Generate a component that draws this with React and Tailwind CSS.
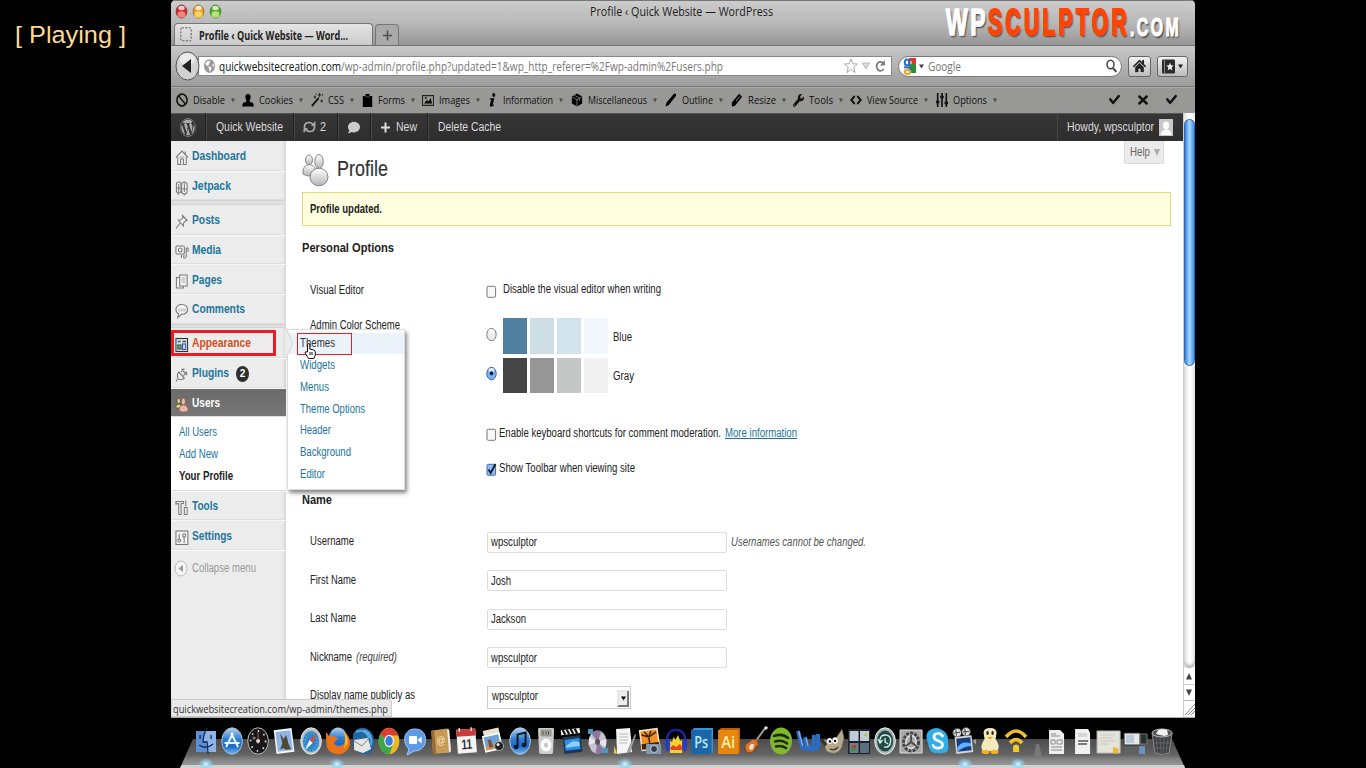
import React, { useLayoutEffect, useRef, useState } from "react";
import { FaBan, FaWrench, FaHome, FaWordpress, FaCheck, FaTimes, FaComment, FaGlobeAmericas } from "react-icons/fa";

/* One line of text, condensed or widened to a given width. */
function T({ w, className = "", children }) {
  const ref = useRef(null);
  const [k, setK] = useState(1);
  useLayoutEffect(() => {
    const n = ref.current.getBoundingClientRect().width / k;
    if (n) setK(w / n);
  }, [w, children]);
  return (
    <span className={"inline-flex shrink-0 leading-none whitespace-nowrap " + className} style={{ width: w }}>
      <span ref={ref} className="origin-left shrink-0 leading-[normal]" style={{ transform: `scaleX(${k})` }}>{children}</span>
    </span>
  );
}

const lucida = "font-['Open_Sans','Noto_Sans',sans-serif]";

function Light({ a, b, c }) {
  return (
    <svg width="13" height="15" viewBox="0 0 13 15" className="shrink-0">
      <ellipse cx="6.5" cy="7.5" rx="5.4" ry="6.5" fill={b} stroke={c} strokeWidth=".8" />
      <ellipse cx="6.5" cy="10.5" rx="4" ry="3.2" fill={a} opacity=".8" />
      <ellipse cx="6.5" cy="4" rx="3.2" ry="2.2" fill="#fff" opacity=".75" />
    </svg>
  );
}

const Down = ({ className = "text-[#4c4c4a]" }) => (
  <svg width="5" height="5" viewBox="0 0 5 5" className={"shrink-0 " + className}><path d="M0 .5h5L2.5 4.5z" fill="currentColor" /></svg>
);

const G = ({ children, w = 14, h = 14 }) => (
  <svg width={w} height={h} viewBox="0 0 14 14" className="shrink-0" preserveAspectRatio="none">{children}</svg>
);

const tools = [
  ["Disable", 66, 32, <FaBan preserveAspectRatio="none" className="h-[14px] w-[12px]" />],
  ["Cookies", 69, 34, <G><path d="M7 1c2 0 2.800 1.500 2.600 3.300C9.500 6 8.600 7 8.500 8.500l3.500 1.500L13 13.500H1l1-3.500 3.500-1.500C5.400 7 4.500 6 4.400 4.300 4.200 2.500 5 1 7 1z" /></G>],
  ["CSS", 50, 16, <G w={12}><path d="M1 13L9 5" stroke="#151515" strokeWidth="2.200" /><path d="M10 0v4M8 2h4M4.500 2.500v3M3 4h3M12.500 6.500v3M11 8h3M13.300 1v1.500M6 .5v1.200" stroke="#222" strokeWidth="1.100" /></G>],
  ["Forms", 61, 27, <G w={11}><path d="M1 3h3.500V1h5v2H13v11H1z" /><path d="M4 3.800h6" stroke="#777" strokeWidth=".7" /></G>],
  ["Images", 64, 31, <G w={12}><path d="M.6 2.600h12.800v9.800H.6z" fill="none" stroke="#222" strokeWidth="1.200" /><path d="M2.500 10.500l3-3.500 2 1.500L10 5l1.800 5.500z" /><circle cx="4.500" cy="5" r="1" /></G>],
  ["Information", 85, 50, <G w={11}><circle cx="8.600" cy="2" r="1.900" /><path d="M3.500 5.500l5.800-.6-2 7 1.600-.6-.4 1.300C6.500 14 3.500 14.500 3.800 11.800L5.300 6.800 3.500 6.500z" /></G>],
  ["Miscellaneous", 94, 59, <G w={12}><path d="M7 .5l6 3v7l-6 3-6-3v-7z" /><path d="M1.500 4L7 6.700 12.500 4M7 6.700V13M4 2.200l6 3v2.500" stroke="#999" strokeWidth=".8" fill="none" /></G>],
  ["Outline", 66, 31, <G w={12}><path d="M.5 13.500l1.300-4L10.500.8q1-.8 2 .2t.2 2L4.500 12z" /></G>],
  ["Resize", 61, 28, <G w={12}><path d="M1 9.500L9.500.8l3.500 3L4.500 13 1 13.500z" /><path d="M6 8l4-4.500" stroke="#999" strokeWidth="1" /></G>],
  ["Tools", 58, 24, <FaWrench preserveAspectRatio="none" className="h-[13px] w-[11px]" />],
  ["View Source", 86, 51, <G w={12}><path d="M5.500 3L1.500 7l4 4M8.500 3l4 4-4 4" fill="none" stroke="#111" strokeWidth="2.200" /></G>],
  ["Options", 66, 34, <G w={12}><path d="M2 0v14M7 0v14M12 0v14" stroke="#111" strokeWidth="1.900" /><path d="M0 9h4M5 4h4M10 10h4" stroke="#111" strokeWidth="2.400" /></G>],
];

const S = ({ children, className = "" }) => (
  <svg width="14" height="17" viewBox="0 0 15 17" preserveAspectRatio="none" className={"mt-[3px] shrink-0 " + className} fill="#f3f3f3" stroke="#777" strokeWidth="1.100">{children}</svg>
);

const ic = {
  dash: <S><path d="M3 8v7.500h9V8M1 8.500l6.500-6.500 6.500 6.500" /><path d="M11 2.500v3M6 15.500V10h3v5.500" /><path d="M5 8h5" stroke="#999" /></S>,
  jet: <S><rect x="1.500" y="3" width="5" height="11" rx="2.500" /><rect x="7" y="3" width="6" height="12" rx="3" /><path d="M4 5v8M10 4v9M3.500 14v2M10 15v1.500M1.500 9H6M7 10h6" /></S>,
  pin: <S><path d="M8 2.500l5 5-2 .5-2 2.500v2.500L3.500 7l2.700-.2 2.200-2z" /><path d="M5.500 10L1 15.500" /></S>,
  media: <S><rect x="1" y="3" width="9" height="8" rx="1" /><circle cx="5.500" cy="7" r="2" /><path d="M12 5v9.500M12 5h2v4M9.500 12v3h2M7 12v3" /></S>,
  pages: <S><path d="M1.500 4.500H9v10.500H1.500z" /><path d="M5 2h8v11H5z" /><path d="M7 5h4M7 7h4M7 9h4" stroke="#aaa" /></S>,
  com: <S><path d="M7.500 2.500C3.500 2.500 1 4.500 1 7.500c0 2.200 1 3.500 3 4.300L3 15.500l4-3.200c4 0 6.500-1.800 6.500-4.800S11 2.500 7.500 2.500z" /><path d="M3 8h9" stroke="#d2d2d2" strokeWidth="3" /></S>,
  app: <S><rect x="1" y="2.500" width="12.500" height="13" fill="#cfe0ee" stroke="#333" /><path d="M3 5.500h3M8 5.500h4" stroke="#456" strokeWidth="1.500" /><rect x="3" y="9" width="3.500" height="4" fill="#7aab56" stroke="#356" /><rect x="8" y="8" width="3.500" height="5.500" fill="#c3d5ff" stroke="#459" /></S>,
  plug: <S><path d="M4 6l6 6c-3 2.500-6 2-7 0S2.500 8 4 6zM6.500 6l3.500-3.500M9 9.500l4-3.500M2.500 13L1 15.500M7 3l6 6" /></S>,
  users: <S><ellipse cx="4" cy="5" rx="1.800" ry="2.700" fill="#f1df85" stroke="#6d6546" /><path d="M.8 12c0-5 6.500-5 6.500 0z" fill="#f1df85" stroke="#6d6546" /><ellipse cx="9" cy="5.500" rx="2.300" ry="3.500" fill="#edb6ac" stroke="#7d5a55" strokeWidth=".8" /><path d="M4.500 15c-1-8 10.500-8 9.500 0q-5 2.500-9.500 0z" fill="#edb6ac" stroke="#7d5a55" strokeWidth=".8" /></S>,
  tools: <S><path d="M1 5V2.500h8v2H6.500V15.500H4V4.500z" /><path d="M11.500 1.500v6M10 8.500h3v7h-3z" /></S>,
  set: <S><rect x="1" y="2" width="12.800" height="13.500" /><path d="M4.500 5v7M9.800 8v6" /><circle cx="4.500" cy="11.500" r="1.500" /><circle cx="9.800" cy="6.500" r="1.600" /></S>,
};

function Item({ icon, w, label, color = "text-[#21759b]", line = true, bg = "", children }) {
  return (
    <div className={"flex h-[29.700px] shrink-0 items-center border-t border-[#f7f7f7] pl-[4px] shadow-[inset_0_-1px_0_#dedede] " + (line ? "" : "border-t-0 ") + bg}>
      {ic[icon]}
      <T w={w} className={"ml-[3px] text-[12.500px] font-bold " + color}>{label}</T>
      {children}
    </div>
  );
}
const Sep = () => <div className="h-[4.500px] shrink-0 border-y border-[#d3d3d3] bg-[#e0e0e0]" />;

function Check({ on }) {
  return (
    <svg width="11" height="13" viewBox="0 0 11 13" className="shrink-0">
      <rect x="1" y="1.300" width="8.600" height="11" rx="1.200" fill={on ? "#8dbdf2" : "#f8f8f8"} stroke={on ? "#446fa8" : "#777"} strokeWidth="1" />
      {on && <path d="M2.500 6.500l2.200 3.500L9.500 1" fill="none" stroke="#10152c" strokeWidth="1.800" />}
    </svg>
  );
}
function Radio({ on }) {
  return (
    <svg width="11" height="15" viewBox="0 0 11 15" className="shrink-0">
      <ellipse cx="5.500" cy="7.500" rx="4.700" ry="6.200" fill={on ? "#79b4f2" : "#ececec"} stroke={on ? "#3d64a0" : "#7c7c7c"} />
      <ellipse cx="5.500" cy="4" rx="3" ry="2" fill="#fff" opacity=".7" />
      {on && <ellipse cx="5.500" cy="7.300" rx="1.700" ry="2.100" fill="#101c38" />}
    </svg>
  );
}

function Field({ label, lw, note, nw, value, vw, after }) {
  return (
    <div className="flex h-[38.500px] shrink-0 items-center pl-[7.500px] text-[12px] text-[#222]">
      <div className="-mt-[2px] flex w-[177px] gap-[4px]"><T w={lw}>{label}</T>{note && <T w={nw} className="italic text-[#444]">{note}</T>}</div>
      <div className="flex h-[21px] w-[240.500px] items-center rounded-[2px] border border-[#dcdcdc] pl-[3px]"><T w={vw}>{value}</T></div>
      {after}
    </div>
  );
}

const D = ({ children }) => <svg width="26.13" height="30" viewBox="0 0 26 30" className="shrink-0">{children}</svg>;
const circ = (f, s = "#ddd") => <ellipse cx="13" cy="15" rx="10.300" ry="13.200" fill={f} stroke={s} strokeWidth="1" />;
const adobe = (f, d, t, c) => (
  <D><path d="M3 4l2-2h19v24l-2 2z" fill={d} /><path d="M2 4h20.500v24H2z" fill={f} /><text x="12.200" y="21.500" textAnchor="middle" fontSize="16" textLength="14" lengthAdjust="spacingAndGlyphs" fontFamily="Open Sans" fontWeight="600" fill={c}>{t}</text></D>
);

const dock = [
  <D><path d="M3 5h20v21H3z" fill="#8eb4ea" /><path d="M3 5h10q-3 7-2 11h2l1 10H3z" fill="#5c8fd8" /><path d="M14 2q-4 7-4 14h4l1 12M7 9v4M18 9v4M6 19q7 5 14-1" stroke="#122a58" fill="none" strokeWidth="1.300" /></D>,
  <D>{circ("url(#blue)", "#a9bcd0")}<path d="M7 21l7-14M19 21L12 7M5.500 17h15" stroke="#e9f5ff" strokeWidth="2" /></D>,
  <D>{circ("#16181a", "#bbb")}<ellipse cx="13" cy="15" rx="7.500" ry="10" fill="none" stroke="#eee" strokeWidth="1.600" strokeDasharray="1.500 5.300" /><path d="M13 6v12" stroke="#c44" strokeWidth="1" /><circle cx="13" cy="15" r="2" fill="#d9d9d9" /><circle cx="9" cy="12" r="1.600" fill="#777" /></D>,
  <D><g transform="rotate(-7 13 15)"><path d="M4 3h18v24H4z" fill="#f6f6f6" /><path d="M5.500 5h15v20h-15z" fill="#8fb5e8" /><path d="M10 7l3 6 3-4 1 9 2 6h-5l-3-2-3 1 3-6z" fill="#4f4a30" /></g></D>,
  <D>{circ("#b9c3ca", "#e8e8e8")}<ellipse cx="13" cy="15.500" rx="8" ry="10.500" fill="#2c87c8" /><ellipse cx="13" cy="15.500" rx="6" ry="8.500" fill="none" stroke="#a8daf5" strokeDasharray="1 2" /><path d="M19 7l-4.500 10-3-3z" fill="#e44b3a" /><path d="M7 24l4.500-10 3 3z" fill="#fff" /></D>,
  <D><ellipse cx="14" cy="13.500" rx="9.500" ry="12" fill="url(#blue)" /><path d="M2 6l3 4 5 0 4 3-4 3q1 5 6 4t6-7V7q7 9 2 16t-13 5Q2 26 2 15z" fill="#e8731c" /><path d="M19 5q6 5 4.500 13l-4 5q3-9 0-18z" fill="#f8b32c" /></D>,
  <D><path d="M3 8q5-9 14-5 8 4 7 15t-9 10Q4 28 3 17z" fill="#23659f" /><path d="M6 6q9-4 13 6M14 4q9 4 7 15" stroke="#5aa8dc" strokeWidth="2" fill="none" /><path d="M4 14l14-2 3 11-8 4-9-3z" fill="#e6e6e4" /><path d="M4 15l8 5 7-8" stroke="#888" fill="none" /></D>,
  <D>{circ("#ebb925", "none")}<path d="M13 15L4 8.500C9-.5 18 0 22.500 9.500H13z" fill="#db3d30" /><path d="M13 15L4 8.500Q0 18 5.500 24.500 8 28 13.500 28L17 19z" fill="#3fa648" /><ellipse cx="13" cy="15" rx="4.800" ry="6.200" fill="#f3f3f3" /><ellipse cx="13" cy="15" rx="3.700" ry="4.900" fill="#3b7dda" /></D>,
  <D><path d="M13 3c7 0 10.500 5 10.500 10.500S20 25 12 25l-7 4 2-6C0 17 1 3 13 3z" fill="#5d9ae8" stroke="#a9cbf5" /><rect x="7" y="10" width="8" height="8" rx="1" fill="#fff" /><path d="M15.500 14l4-3.500v7z" fill="#fff" /></D>,
  <D><g transform="rotate(-5 13 15)"><path d="M4 4l16-1 2 1v22l-2 1.500L4 27z" fill="#c79a55" /><path d="M20 4l2 1v21l-2 1z" fill="#eee" /><path d="M4 4h3v23H4z" fill="#976b32" /><text x="8.500" y="18" fontSize="11" textLength="9" lengthAdjust="spacingAndGlyphs" fontFamily="Liberation Sans" fill="#f8e7c1">@</text></g></D>,
  <D><g transform="rotate(-4 13 15)"><path d="M3 3h19v24H3z" fill="#f4f4f4" /><path d="M3 3h19v7H3z" fill="#cc3b38" /><path d="M6 1.500v4M18 1.500v4" stroke="#ddd" strokeWidth="1.500" /><text x="12.500" y="23" textAnchor="middle" fontSize="14" fontWeight="700" textLength="11" lengthAdjust="spacingAndGlyphs" fontFamily="Liberation Sans" fill="#333">11</text></g></D>,
  <D><g transform="rotate(-12 13 15)"><path d="M5 3h16v17H5z" fill="#e8e3cf" /><path d="M3 8h18v17H3z" fill="#fff" /><path d="M4.500 9.500h15V23h-15z" fill="#6ba2d5" /><path d="M4.500 19h15v4h-15z" fill="#c69b66" /><path d="M8 13h3l1 8H8z" fill="#8a4b2d" /></g><circle cx="19" cy="20" r="4.500" fill="#222" stroke="#aaa" /><circle cx="18" cy="18.500" r="1.500" fill="#eee" /></D>,
  <D>{circ("url(#blue)", "#b9cbe0")}<path d="M10.500 20V8.500l8-2V18" stroke="#10182c" strokeWidth="2" fill="none" /><ellipse cx="9" cy="21" rx="2.500" ry="2.300" fill="#10182c" /><ellipse cx="17" cy="19" rx="2.500" ry="2.300" fill="#10182c" /></D>,
  <D><path d="M6 2h14q1 0 1 2l-1 22q0 2-2 2H8q-2 0-2-2L5 4q0-2 1-2z" fill="#cdcdcd" /><rect x="8" y="4" width="10" height="6" fill="#a7a99b" stroke="#777" strokeWidth=".6" /><path d="M10 5.500v3M13 5.500v3M15.500 5.500v3" stroke="#444" /><ellipse cx="13" cy="19" rx="5.500" ry="6.500" fill="#fafafa" /><ellipse cx="13" cy="19" rx="2" ry="2.500" fill="#c5c5c5" /></D>,
  <D><g transform="rotate(-7 13 15)"><path d="M4 10h18v17H4z" fill="#1b3653" /><path d="M5.500 13h15v11h-15z" fill="#2e8fe2" /><path d="M6 20q7-7 14-3v4H6z" fill="#8cd0ff" /><path d="M3 3h19v5H3z" fill="#f2f2f2" /><path d="M5 3l2 5M9 3l2 5M13 3l2 5M17 3l2 5" stroke="#111" strokeWidth="2.200" /></g></D>,
  <D><ellipse cx="12.500" cy="16" rx="9" ry="11.500" fill="#c6c2cf" /><path d="M12.500 16L6 7q6-4 10-1zM12.500 16l7 8q-4 5-9 3z" fill="#8e759f" /><path d="M12.500 16l-9 3 1-8zM12.500 16l9-3-1 8z" fill="#e8e4ea" /><ellipse cx="12.500" cy="16" rx="2.500" ry="3" fill="#555" /><path d="M3 3h5v5H3zM17 22h6v5h-6z" fill="#4a97bd" /></D>,
  <D><path d="M5 3l14-1 2 24-15 2z" fill="#f4f4f4" /><path d="M8 8h9M8 11h9M8 14h9M8 17h8" stroke="#bbb" /><path d="M24 8L17 24l-1 4 3-2 6-17z" fill="#a7a9ad" stroke="#666" strokeWidth=".5" /><path d="M3 20l3 7-3 1z" fill="#e6cf3a" /></D>,
  <D><g transform="rotate(-8 12 13)"><path d="M3 3h19v21H3z" fill="#f1e7d2" /><path d="M4.500 4.500h16v17h-16z" fill="#ef8f1f" /><path d="M12 12V22M4.500 18h16v4h-16z" stroke="#3a1d08" strokeWidth="1.500" fill="#4b2509" /><path d="M5 8l7 3 8-4M8 5l4 6 3-6" stroke="#3a1d08" strokeWidth="1.400" fill="none" /></g><path d="M9 18h15v10H9z" fill="#8298ad" /><circle cx="17" cy="23" r="3.500" fill="#2e3c4c" stroke="#ccc" /></D>,
  <D><path d="M4 17Q3 4 13 4t9 13" stroke="#17249d" strokeWidth="2.500" fill="none" /><path d="M7 27V15l2 1 1.500-5 2 3L15 9l2 6 2-1v13z" fill="#f6d32e" /><path d="M7 22l3-3 3 2 4-3 2 3v3H8z" fill="#e0472b" /><ellipse cx="4.300" cy="19" rx="2.500" ry="6.500" fill="#2b3cc4" /><ellipse cx="21.700" cy="19" rx="2.500" ry="6.500" fill="#2b3cc4" /></D>,
  adobe("#1a66a8", "#3e92d3", "Ps", "#bfe6ff"),
  adobe("#e8860f", "#b5600a", "Ai", "#fff1a8"),
  <D><path d="M24 1l-11 15" stroke="#9b9b9b" strokeWidth="2" /><path d="M23 1l2 2" stroke="#ddd" strokeWidth="3" /><path d="M13 13q-4 0-6 3-5 2-4 7 1 5 6 4 4-1 5-6 3-2 2-5z" fill="#d9772c" stroke="#7a3610" /><path d="M9 18q-3 3-1 6l3-1 1-5z" fill="#f5e6cf" /></D>,
  <D><ellipse cx="13" cy="15" rx="11" ry="13.500" fill="#7fb82c" /><path d="M6 10q8-3 14 2M7 15.500q7-2 12 2M8 20.500q5-1.500 10 1.500" stroke="#1d2b0b" strokeWidth="2.500" fill="none" strokeLinecap="round" /></D>,
  <D><path d="M4 5l4 16q4 4 5-1l-2-9M13 19q3 6 6 4l1-14M19 23q4 1 5-3V8" stroke="#2b6cc6" strokeWidth="4" fill="none" /><path d="M4.500 5l4 15M12 12l2 8" stroke="#7db3ee" strokeWidth="1.200" fill="none" /></D>,
  <D><path d="M3 13l6 2 7-3 6-9 2 9-2 9q-4 8-11 6-7-1-6-8z" fill="#b5a88b" stroke="#5d5544" strokeWidth=".6" /><ellipse cx="9.500" cy="15" rx="2.500" ry="3" fill="#fff" /><ellipse cx="15" cy="14.500" rx="2.700" ry="3.200" fill="#fff" /><circle cx="9.800" cy="15.500" r="1.200" /><circle cx="15" cy="15" r="1.200" /><path d="M2 14l3 4" stroke="#333" strokeWidth="3.500" strokeLinecap="round" /><path d="M10 23q5 2 8-2" stroke="#4d4435" fill="none" strokeWidth="1.500" /></D>,
  <D><path d="M2 3h22v25H2z" fill="#1c2027" /><path d="M3.500 5h9v10h-9zM14 5h9v10h-9z" fill="#c3cbd6" /><path d="M3.500 17h9v10h-9z" fill="#6e7e91" /><path d="M14 17h9v10h-9z" fill="#5d6d82" /><path d="M6 19h4v3H6z" fill="#c73a2b" /><path d="M5 22h5v3H5z" fill="#349246" /><path d="M17 9l4-2v4z" fill="#a6c34f" /></D>,
  <D>{circ("#a9b8b5", "#eee")}<ellipse cx="13" cy="15" rx="8" ry="10.500" fill="#244b4a" /><path d="M8 17Q7 9 13 9t5.500 6.500Q18 22 12 21M13 12v4l3 2M6 13l2 4 2.500-3" stroke="#d8efe9" strokeWidth="1.400" fill="none" /></D>,
  <D><path d="M2 4h22v23H2z" fill="#a9a9a9" stroke="#ddd" /><ellipse cx="13" cy="16" rx="7.500" ry="9" fill="none" stroke="#454545" strokeWidth="3" strokeDasharray="3 1.200" /><ellipse cx="13" cy="16" rx="5" ry="6.500" fill="none" stroke="#dedede" strokeWidth="1.500" /><path d="M13 16V9M13 16l5 4M13 16l-5 4" stroke="#4b4b4b" strokeWidth="1.800" /></D>,
  <D><path d="M5 4q6-4 12 0 7 3 6 14 2 9-6 9Q3 29 3 17-1 8 5 4z" fill="#33aee9" /><path d="M17.500 10q-2-3-5-2.500-4 .5-3.500 4c.5 4 8.500 2.500 8.500 7 0 4.500-7.500 5-9.500 1" stroke="#fff" strokeWidth="2.700" fill="none" strokeLinecap="round" /></D>,
  <D><g transform="rotate(-6 13 15)"><circle cx="7" cy="6" r="4.300" fill="#ddd" stroke="#444" /><circle cx="16" cy="6" r="4.300" fill="#ddd" stroke="#444" /><path d="M6 3v6M4 6h6M15 3v6M13 6h6" stroke="#444" /><path d="M4 10h17v17H4z" fill="#d6d6d6" /><path d="M5.500 12h14v13h-14z" fill="#153e81" /><path d="M5.500 21q5-7 14-3v3q-7-1-14 4z" fill="#5fb3ff" /></g><path d="M22 15l3-2v6z" fill="#aaa" /></D>,
  <D><path d="M6.500 7q0-5 6.500-5t6.500 5l-1 6q5 7 2 12h-15q-3-5 2-12z" fill="#f2e9bd" /><ellipse cx="10.500" cy="7" rx="1.200" ry="2" fill="#222" /><ellipse cx="15.500" cy="7" rx="1.200" ry="2" fill="#222" /><path d="M10 11h6l-3 2.500z" fill="#eda21a" /><ellipse cx="8.500" cy="26" rx="4" ry="2" fill="#efb21c" /><ellipse cx="17.500" cy="26" rx="4" ry="2" fill="#efb21c" /></D>,
  <D><g fill="none" stroke="#edbf2e" strokeWidth="3.700"><path d="M3 11q10-12 20 0M7 17q6-7 12 0" /></g><path d="M10 20q3-3 6 0v6h-6z" fill="#f6c929" /></D>,
];

const files = [
  <D><path d="M5 4h11l4 4v20H5z" fill="#eee" /><path d="M7 8h5M7 10h9M7 14h4v4H7zM13 14h5v4h-5zM7 21h11M7 24h11" stroke="#888" fill="none" /></D>,
  <D><path d="M5 3h13l2 4v21H5z" fill="#f1f1f1" /><path d="M8 8h9M8 10h9" stroke="#b9b9b9" /><path d="M8 15h10M8 18h9" stroke="#555" strokeWidth="1.300" /></D>,
  <D><path d="M1 5h23v22H1z" fill="#e3e3dc" stroke="#bbb" /><path d="M4 9h15M4 12h13M4 15h15M4 18h9" stroke="#c9c9bf" /><path d="M17 21l6 2-2 5-4-1z" fill="#edb62e" /></D>,
  <D><path d="M2 7h16v12H2z" fill="#e8e8e8" stroke="#333" /><path d="M4 9h8v8H4z" fill="#b9cbd8" /><path d="M18 8h7v10h-7z" fill="#26332f" stroke="#777" /><path d="M2 22h14M4 25h10" stroke="#666" strokeWidth="1.500" /><path d="M17 20h6v8h-6z" fill="#6a8fc1" /></D>,
  <D><path d="M3 7l3 20q7 3 14 0l3-20z" fill="#3f4143" stroke="#8b8b8b" /><ellipse cx="13" cy="7" rx="10" ry="4" fill="#555" stroke="#bbb" /><path d="M7 8l2-4 4-1 5 1 1 5-4 1z" fill="#f1f1f1" /><path d="M7 12l2 15M11 12l1 15M15 12l-1 15M19 12l-2 15M5 17h16M5 22h15" stroke="#777" strokeWidth=".6" /></D>,
];

function Dock() {
  return (
    <div className="relative h-[50px] w-[1366px] shrink-0 bg-black">
      <svg width="1366" height="50" className="absolute left-0 top-0">
        <defs>
          <linearGradient id="shelf" x1="0" y1="0" x2="0" y2="1"><stop offset="0" stopColor="#4c4c4c" /><stop offset=".55" stopColor="#646464" /><stop offset=".68" stopColor="#808080" /><stop offset="1" stopColor="#a2a2a2" /></linearGradient>
          <linearGradient id="blue" x1="0" y1="0" x2="0" y2="1"><stop offset="0" stopColor="#b5d3ef" /><stop offset=".45" stopColor="#2c7cd0" /><stop offset=".7" stopColor="#1c69c4" /><stop offset="1" stopColor="#6dbdf5" /></linearGradient>
          <radialGradient id="glow"><stop offset="0" stopColor="#e7fbff" /><stop offset=".5" stopColor="#8ed4f8" stopOpacity=".7" /><stop offset="1" stopColor="#8ed4f8" stopOpacity="0" /></radialGradient>
        </defs>
        <path d="M193 21h979l13 29H180z" fill="url(#shelf)" />
        <path d="M182 47h1002l1 3H180z" fill="#d2d2d2" />
        <path d="M1034 39l2-13h3l3 13z" fill="#777" />
        {[206, 337, 625, 965, 1018].map((x) => <ellipse key={x} cx={x} cy="46" rx="8" ry="6" fill="url(#glow)" />)}
      </svg>
      <div className="relative flex pl-[193px] pt-[8px]">
        {dock.map((d, i) => <React.Fragment key={i}>{d}</React.Fragment>)}
        <div className="w-[15px] shrink-0" />
        {files.map((d, i) => <React.Fragment key={i}>{d}</React.Fragment>)}
      </div>
    </div>
  );
}

const BarCell = ({ className, children }) => <div className={"flex h-full shrink-0 items-center border-r border-[#222] shadow-[1px_0_0_#484848] " + className}>{children}</div>;

export default function App() {
  return (
    <div className="h-[768px] w-[1366px] overflow-hidden bg-black font-['Liberation_Sans',Arial,sans-serif]">
      <div className="flex h-[718px]">
        <div className="w-[171px] shrink-0 pl-[15px] pt-[21px]"><T w={111} className="text-[24.500px] text-[#ffd993]">[ Playing ]</T></div>
        <div className="relative flex h-[718px] w-[1024px] flex-col overflow-hidden rounded-t-[5px] bg-white">
          {/* title bar and tabs */}
          <div className="flex h-[46px] shrink-0 flex-col border-b border-[#707070] bg-linear-to-b from-[#cdcdcd] via-[#b9b9b9] to-[#969696] shadow-[inset_0_1px_0_#777]">
            <div className="flex h-[24px] items-center pl-[4px]">
              <div className="-mt-[1px] flex gap-[4px]">
                <Light a="#ff9a96" b="#cf2b2f" c="#872326" />
                <Light a="#ffe36b" b="#ec9c2d" c="#9a6420" />
                <Light a="#c5f58a" b="#55a92d" c="#3b7a21" />
              </div>
              <T w={183} className={"ml-[368px] text-[12px] font-medium text-[#1c1c1c] " + lucida}>Profile ‹ Quick Website — WordPress</T>
            </div>
            <div className="flex h-[22px] items-end pl-[3px]">
              <div className="flex h-[22px] w-[199px] items-center rounded-t-[4px] border border-b-0 border-[#777] bg-linear-to-b from-[#e4e4e4] to-[#cbcbcb] pl-[5px]">
                <svg width="12" height="15"><rect x=".8" y=".8" width="10.400" height="13" rx="1" fill="none" stroke="#555" strokeDasharray="2 1.500" /></svg>
                <T w={149} className={"mt-px ml-[7px] text-[11.500px] font-bold text-[#222] " + lucida}>Profile ‹ Quick Website — Word...</T>
              </div>
              <div className="ml-[2px] flex h-[21px] w-[24px] items-center justify-center rounded-t-[4px] border border-b-0 border-[#777] bg-[#a9a9a9]">
                <svg width="9" height="11"><path d="M4.500 .5v10M0 5.500h9" stroke="#4d4d4d" strokeWidth="1.600" /></svg>
              </div>
            </div>
          </div>
          {/* navigation bar */}
          <div className="flex h-[41px] shrink-0 items-center border-b border-[#777] bg-linear-to-b from-[#c9c9c9] to-[#9c9c9c] pl-[4px]">
            <svg width="26" height="30" viewBox="0 0 26 30" className="z-10 shrink-0"><ellipse cx="12.500" cy="15" rx="11.500" ry="14" fill="#d2d2d2" stroke="#555" /><ellipse cx="12.500" cy="8" rx="8" ry="6" fill="#f3f3f3" opacity=".7" /><path d="M7 15l9-7v14z" fill="#222" /></svg>
            <div className="-ml-[3px] flex h-[20px] w-[694px] items-center border border-[#888] bg-white pl-[5px]">
              <FaGlobeAmericas preserveAspectRatio="none" className="h-[14px] w-[11px] shrink-0 text-[#999]" />
              <T w={122} className={"mt-px ml-[4px] text-[12px] font-medium text-[#111] " + lucida}>quickwebsitecreation.com</T>
              <T w={382} className={"mt-px text-[12px] font-medium text-[#777] " + lucida}>/wp-admin/profile.php?updated=1&wp_http_referer=%2Fwp-admin%2Fusers.php</T>
              <svg width="14" height="16" viewBox="0 0 14 16" className="ml-[121px]"><path d="M7 1l1.800 4.800 4.700.2-3.700 3.300L11 14.500 7 11.500 3 14.500l1.200-5.200L.5 6l4.700-.2z" fill="#fff" stroke="#aaa" /></svg>
              <svg width="8" height="8" className="ml-[4px]"><path d="M.5 1h7L4 7z" fill="#ddd" stroke="#aaa" strokeWidth=".8" /></svg>
              <svg width="11" height="14" viewBox="0 0 11 14" className="ml-[5px]"><path d="M8 4Q4.500 1.500 2.500 4.500T3 11q3 2 6-1" fill="none" stroke="#777" strokeWidth="1.700" /><path d="M9.800 1v5.500H5z" fill="#777" /></svg>
            </div>
            <div className="ml-[6px] flex h-[21px] w-[224px] items-center rounded-full border border-[#777] bg-white pl-[4px]">
              <svg width="14" height="17" viewBox="0 0 14 17"><path d="M6 0h7v6H6z" fill="#d63c35" /><path d="M6 6h7v9H6z" fill="#2e8c3a" /><ellipse cx="4" cy="4.500" rx="2.200" ry="3" fill="#fff" stroke="#2f6cc9" strokeWidth="2" /><path d="M1 9.500q6-1 7 2" fill="none" stroke="#2f6cc9" strokeWidth="2" /><ellipse cx="4.500" cy="14" rx="3" ry="2" fill="#fff" stroke="#e4a42b" strokeWidth="1.800" /><path d="M8 3v3" stroke="#fff" /></svg>
              <Down className="ml-[2px] text-[#444]" />
              <T w={33} className={"mt-px ml-[4px] text-[12px] font-medium text-[#777] " + lucida}>Google</T>
              <svg width="11" height="14" viewBox="0 0 11 14" className="ml-[145px]"><ellipse cx="4.500" cy="5.500" rx="3.500" ry="4.300" fill="none" stroke="#444" strokeWidth="1.500" /><path d="M6.800 8.800l3.500 4" stroke="#444" strokeWidth="2" /></svg>
            </div>
            <div className="ml-[6px] flex h-[21px] w-[23px] items-center justify-center rounded-[3px] border border-[#666] bg-linear-to-b from-[#f2f2f2] to-[#bdbdbd]"><FaHome preserveAspectRatio="none" className="h-[14px] w-[13px] text-[#222]" /></div>
            <div className="ml-[6px] flex h-[21px] w-[31px] items-center justify-center gap-[3px] rounded-[3px] border border-[#666] bg-linear-to-b from-[#f2f2f2] to-[#bdbdbd]">
              <svg width="13" height="15" viewBox="0 0 13 15"><rect width="13" height="14" y=".5" rx="1" fill="#2b2b2b" /><path d="M2.500 1v13" stroke="#888" /><path d="M8 3.500l1 2.700 2.700.2-2 1.900.6 3.200L8 9.800l-2.300 1.700.6-3.200-2-1.900L7 6.200z" fill="#f4f4f4" /></svg>
              <Down className="text-[#222]" />
            </div>
          </div>
          {/* developer toolbar */}
          <div className="flex h-[26px] shrink-0 items-center bg-[#989896] pl-[3px] shadow-[inset_0_1px_0_#aaa]">
            {tools.map(([t, iw, tw, icon]) => (
              <div key={t} className="flex shrink-0 items-center" style={{ width: iw }}>
                <div className="flex w-[16px] shrink-0 justify-center text-[#111]">{icon}</div>
                <T w={tw} className={"-mt-px ml-[3px] mr-[6px] text-[11px] font-medium text-[#111] " + lucida}>{t}</T>
                <svg width="4" height="5"><path d="M0 .5h4L2 4.500z" fill="#4c4c4a" /></svg>
              </div>
            ))}
            <div className="ml-[109px] flex gap-[18px] text-[#111]">
              <FaCheck preserveAspectRatio="none" className="h-[13px] w-[11px]" /><FaTimes preserveAspectRatio="none" className="h-[14px] w-[10px]" /><FaCheck preserveAspectRatio="none" className="h-[13px] w-[11px]" />
            </div>
          </div>
          <div className="flex h-[605px] shrink-0">
            <div className="flex w-[1012px] shrink-0 flex-col">
              {/* admin bar */}
              <div className="flex h-[28px] shrink-0 items-center bg-linear-to-b from-[#363636] to-[#2e2e2e] text-[12.500px] text-[#dcdcdc] shadow-[inset_0_1px_0_#555]">
                <BarCell className="w-[35px] justify-center"><FaWordpress preserveAspectRatio="none" className="h-[19px] w-[16px] text-[#aaa]" /></BarCell>
                <BarCell className="w-[88px] pl-[10px]"><T w={67}>Quick Website</T></BarCell>
                <BarCell className="w-[44px] gap-[4px] pl-[9px]">
                  <svg width="13" height="14" viewBox="0 0 13 14" fill="none" stroke="#a8a8a8" strokeWidth="1.700"><path d="M1.500 8.500V7Q1.500 2.500 6 2.500q3 0 4 2.500M11.500 5.500V7q0 4.500-4.500 4.500-3 0-4.500-2.500" /><path d="M12 1.500V5.500H8.500M1 12.500V8.500h3.500" strokeWidth="1" fill="#a8a8a8" /></svg>
                  <T w={6}>2</T></BarCell>
                <BarCell className="w-[33px] justify-center"><FaComment preserveAspectRatio="none" className="h-[13px] w-[12px] text-[#ccc]" /></BarCell>
                <BarCell className="w-[57px] gap-[6px] pl-[10px]"><svg width="9" height="11"><path d="M4.500 .5v10M0 5.500h9" stroke="#ddd" strokeWidth="2" /></svg><T w={21}>New</T></BarCell>
                <div className="flex w-[629px] items-center pl-[10px]"><T w={63}>Delete Cache</T></div>
                <div className="flex h-full flex-1 items-center border-l border-[#484848] pl-[9px]"><T w={87}>Howdy, wpsculptor</T>
                  <svg width="14" height="17" className="ml-[5px]"><rect width="14" height="17" fill="#c8c8c8" /><ellipse cx="7" cy="6.500" rx="3" ry="4" fill="#fff" /><path d="M1.500 16Q2 11 7 10.500t5.500 5.500z" fill="#fff" /></svg></div>
              </div>
              <div className="flex h-[577px] overflow-hidden">
                {/* side menu */}
                <div className="flex w-[115px] shrink-0 flex-col bg-[#ececec] shadow-[inset_-3px_0_3px_-1px_#d6d6d6]">
                  <Item icon="dash" w={54} label="Dashboard" line={false} />
                  <Item icon="jet" w={39} label="Jetpack" />
                  <Sep />
                  <Item icon="pin" w={28} label="Posts" line={false} />
                  <Item icon="media" w={29} label="Media" />
                  <Item icon="pages" w={30} label="Pages" />
                  <Item icon="com" w={53} label="Comments" />
                  <Sep />
                  <Item icon="app" w={59} label="Appearance" color="text-[#d54e21]" line={false} />
                  <Item icon="plug" w={37} label="Plugins"><span className="ml-[7px] mt-[1px] flex h-[16px] w-[13px] items-center justify-center rounded-[50%] bg-[#2e2e2e] text-[10px] font-bold text-white">2</span></Item>
                  <Item icon="users" w={28} label="Users" color="text-white" bg="border-[#5c5c5c] bg-linear-to-b from-[#6b6b6b] to-[#777777]" />
                  <div className="flex h-[73.500px] shrink-0 flex-col border-b border-[#dadada] bg-white pl-[8px] pt-[4px] text-[12px] text-[#21759b]">
                    <div className="flex h-[21.750px] items-center"><T w={38}>All Users</T></div>
                    <div className="flex h-[21.750px] items-center"><T w={39}>Add New</T></div>
                    <div className="flex h-[21.750px] items-center"><T w={54} className="font-bold text-[#222]">Your Profile</T></div>
                  </div>
                  <Item icon="tools" w={26} label="Tools" />
                  <Item icon="set" w={40} label="Settings" />
                  <div className="flex h-[35px] shrink-0 items-center border-t border-white pl-[3px]">
                    <svg width="14" height="17"><ellipse cx="7" cy="8.500" rx="6" ry="7.500" fill="#f4f4f4" stroke="#bbb" /><path d="M4.500 8.500l4.500-3.500v7z" fill="#999" /></svg>
                    <T w={64} className="ml-[4px] text-[12px] text-[#999]">Collapse menu</T>
                  </div>
                </div>
                {/* profile page */}
                <div className="flex w-[897px] shrink-0 flex-col bg-white pl-[16px] text-[12px] text-[#222]">
                  <div className="flex h-[51px] shrink-0">
                    <svg width="27" height="33" viewBox="0 0 27 33" className="mt-[13px]">
                      <defs><linearGradient id="gr" x1="0" y1="0" x2="0" y2="1"><stop offset="0" stopColor="#fff" /><stop offset="1" stopColor="#b5b5b5" /></linearGradient></defs>
                      <g fill="url(#gr)" stroke="#858585"><ellipse cx="7" cy="6" rx="3.500" ry="5" /><path d="M1 20q-1-9 7-9.500 6 1 6 9.500-6 4-13 0z" /><ellipse cx="17" cy="7.500" rx="4.200" ry="7" /><ellipse cx="17" cy="23" rx="9" ry="8.800" /></g>
                    </svg>
                    <T w={51} className="ml-[8px] mt-[15px] text-[22px] text-[#333] [-webkit-text-stroke:0.2px_#333]">Profile</T>
                    <div className="ml-[736px] flex h-[23px] w-[40px] items-center gap-[4px] rounded-b-[2px] border border-t-0 border-[#ddd] bg-[#ebebeb] pl-[5px]"><T w={20} className="text-[12px] text-[#666]">Help</T><svg width="6" height="7"><path d="M0 0h6L3 7z" fill="#aaa" /></svg></div>
                  </div>
                  <div className="flex h-[34px] w-[869px] shrink-0 items-center border border-[#e3db78] bg-[#ffffe0] pl-[7px]"><T w={72} className="font-bold">Profile updated.</T></div>
                  <div className="flex h-[44px] shrink-0 items-center"><T w={92} className="-mt-px text-[13px] font-bold">Personal Options</T></div>
                  <div className="flex h-[39px] shrink-0 items-center pl-[7.500px]">
                    <div className="w-[176.500px]"><T w={54}>Visual Editor</T></div>
                    <div className="mt-[3px] flex"><Check /></div><T w={158} className="-mt-px ml-[6px]">Disable the visual editor when writing</T>
                  </div>
                  <div className="flex h-[106px] shrink-0 pl-[7.500px]">
                    <div className="flex h-[31px] w-[176.500px] items-center"><T w={90}>Admin Color Scheme</T></div>
                    <div className="mt-[9px] flex flex-col gap-[4px]">
                      <div className="flex h-[35.500px] items-center"><div className="mb-[3px] flex"><Radio /></div>
                        <div className="ml-[5.500px] flex h-full gap-[3px]"><i className="w-[24px] bg-[#5080a0]" /><i className="w-[24px] bg-[#cddfe5]" /><i className="w-[24px] bg-[#d1e3ec]" /><i className="w-[24px] bg-[#f3f8ff]" /></div>
                        <T w={19} className="ml-[5px] mt-[2px]">Blue</T></div>
                      <div className="flex h-[35.500px] items-center"><div className="mb-[3px] flex"><Radio on /></div>
                        <div className="ml-[5.500px] flex h-full gap-[3px]"><i className="w-[24px] bg-[#454545]" /><i className="w-[24px] bg-[#969696]" /><i className="w-[24px] bg-[#c5c7c7]" /><i className="w-[24px] bg-[#f1f1f1]" /></div>
                        <T w={21} className="ml-[5px] mt-[2px]">Gray</T></div>
                    </div>
                  </div>
                  <div className="flex h-[36px] shrink-0 items-center pl-[184px]"><div className="mt-[3px] flex"><Check /></div><T w={222} className="-mt-px ml-[2px]">Enable keyboard shortcuts for comment moderation.</T><T w={72} className="-mt-px ml-[4px] text-[#21759b] underline">More information</T></div>
                  <div className="flex h-[35px] shrink-0 items-center pl-[184px]"><div className="mt-[2px] flex"><Check on /></div><T w={136} className="-mt-px ml-[2px]">Show Toolbar when viewing site</T></div>
                  <div className="mb-[9px] flex h-[28px] shrink-0 items-center"><T w={30} className="-mt-px text-[13px] font-bold">Name</T></div>
                  <Field label="Username" lw={44} value="wpsculptor" vw={46} after={<T w={135} className="ml-[4px] italic text-[#555]">Usernames cannot be changed.</T>} />
                  <Field label="First Name" lw={46} value="Josh" vw={20} />
                  <Field label="Last Name" lw={46} value="Jackson" vw={35} />
                  <Field label="Nickname" lw={42} note="(required)" nw={41} value="wpsculptor" vw={46} />
                  <div className="flex h-[38.500px] shrink-0 items-center pl-[7.500px]">
                    <div className="-mt-[3px] w-[177px]"><T w={105}>Display name publicly as</T></div>
                    <div className="mt-[2px] flex h-[23px] w-[144.500px] items-center justify-between border border-[#ccc] pl-[4px] pr-[1px]"><T w={46} className="-mt-[2px]">wpsculptor</T>
                      <span className="mt-[2px] flex h-[17px] w-[12px] items-center justify-center border-2 border-[#e8e8e8] border-b-[#777] border-r-[#777] bg-[#eee]"><Down className="text-black" /></span></div>
                  </div>
                </div>
              </div>
            </div>
            {/* scroll bar */}
            <div className="flex w-[12px] shrink-0 flex-col border-l border-[#ccc] bg-linear-to-r from-[#e4e4e4] via-white to-[#eee]">
              <div className="mt-[6px] h-[247px] rounded-full border border-[#2a62b5] bg-linear-to-r from-[#3d80d9] via-[#a5d8ff] to-[#3f8fe6]" />
              <div className="h-[302px] rounded-b-full shadow-[inset_0_-3px_3px_#bbb]" />
              <div className="flex h-[17px] items-center justify-center border-b border-[#ccc] bg-white"><svg width="7" height="7"><path d="M0 6.500h6L3 0z" fill="#444" /></svg></div>
              <div className="flex h-[16px] items-center justify-center border-b border-[#bbb] bg-white"><svg width="7" height="7"><path d="M0 .5h6L3 7z" fill="#444" /></svg></div>
              <div className="flex h-[15px] items-end bg-white"><svg width="11" height="14"><path d="M1 13L11 2M4 13l7-7M7 13l4-4" stroke="#888" /></svg></div>
            </div>
          </div>
          {/* logo over the title bar */}
          <div className="absolute left-[775px] top-[2px] flex items-start font-bold [text-shadow:2px_2px_2px_#444]">
            <T w={42} className="text-[37px] tracking-[4px] text-white [-webkit-text-stroke:1.6px_#fff]">WP</T>
            <T w={142} className="text-[37px] tracking-[6px] text-[#ff4406] [-webkit-text-stroke:2px_#ff4406]">SCULPTOR</T>
            <T w={51} className="mt-[10px] text-[26px] tracking-[4px] text-white [-webkit-text-stroke:1.2px_#fff]">.COM</T>
          </div>
          {/* fly-out menu */}
          <div className="absolute left-[116px] top-[329px] flex h-[161px] w-[118px] flex-col border border-[#dcdcdc] bg-white pt-[2.500px] text-[12px] text-[#21759b] shadow-[2px_3px_4px_#888]">
            {[["Themes", 35], ["Widgets", 35], ["Menus", 29], ["Theme Options", 65], ["Header", 31], ["Background", 51], ["Editor", 25]].map(([t, w], i) => (
              <div key={t} className={"flex h-[21.750px] shrink-0 items-center pl-[12px] " + (i === 0 ? "bg-[#eaf2fa] text-[#333]" : "")}><T w={w}>{t}</T></div>
            ))}
          </div>
          <svg width="9" height="30" className="absolute left-[114px] top-[328px]"><path d="M0 0L8 15 0 30z" fill="#ececec" /><path d="M1 0L8 15 1 30" fill="none" stroke="#d5d5d5" /></svg>
          <div className="absolute left-0 top-[330px] h-[26px] w-[105px] border-3 border-[#ed1c24]" />
          <div className="absolute left-[126px] top-[333px] h-[22px] w-[55px] border border-[#ed1c24]" />
          <svg width="12" height="16" viewBox="0 0 12 16" className="absolute left-[133px] top-[343px]"><path d="M3.500 9V2q0-1.500 1.200-1.500T5.800 2v4l4 1q1.500.5 1.500 2v3l-1.500 3.500H4.500L1 10q0-2 2.500-1z" fill="#fff" stroke="#111" /><path d="M6 9v3M8 9v3" stroke="#111" /></svg>
          <div className="absolute left-0 top-[699px] flex h-[18px] w-[221px] items-center rounded-tr-[3px] border border-[#ccc] bg-[#e9e9e9] pl-[1px]"><T w={215} className={"text-[11.500px] font-medium text-[#333] " + lucida}>quickwebsitecreation.com/wp-admin/themes.php</T></div>
          <div className="absolute bottom-0 left-0 h-[1px] w-full bg-[#aaa]" />
        </div>
      </div>
      <Dock />
    </div>
  );
}
